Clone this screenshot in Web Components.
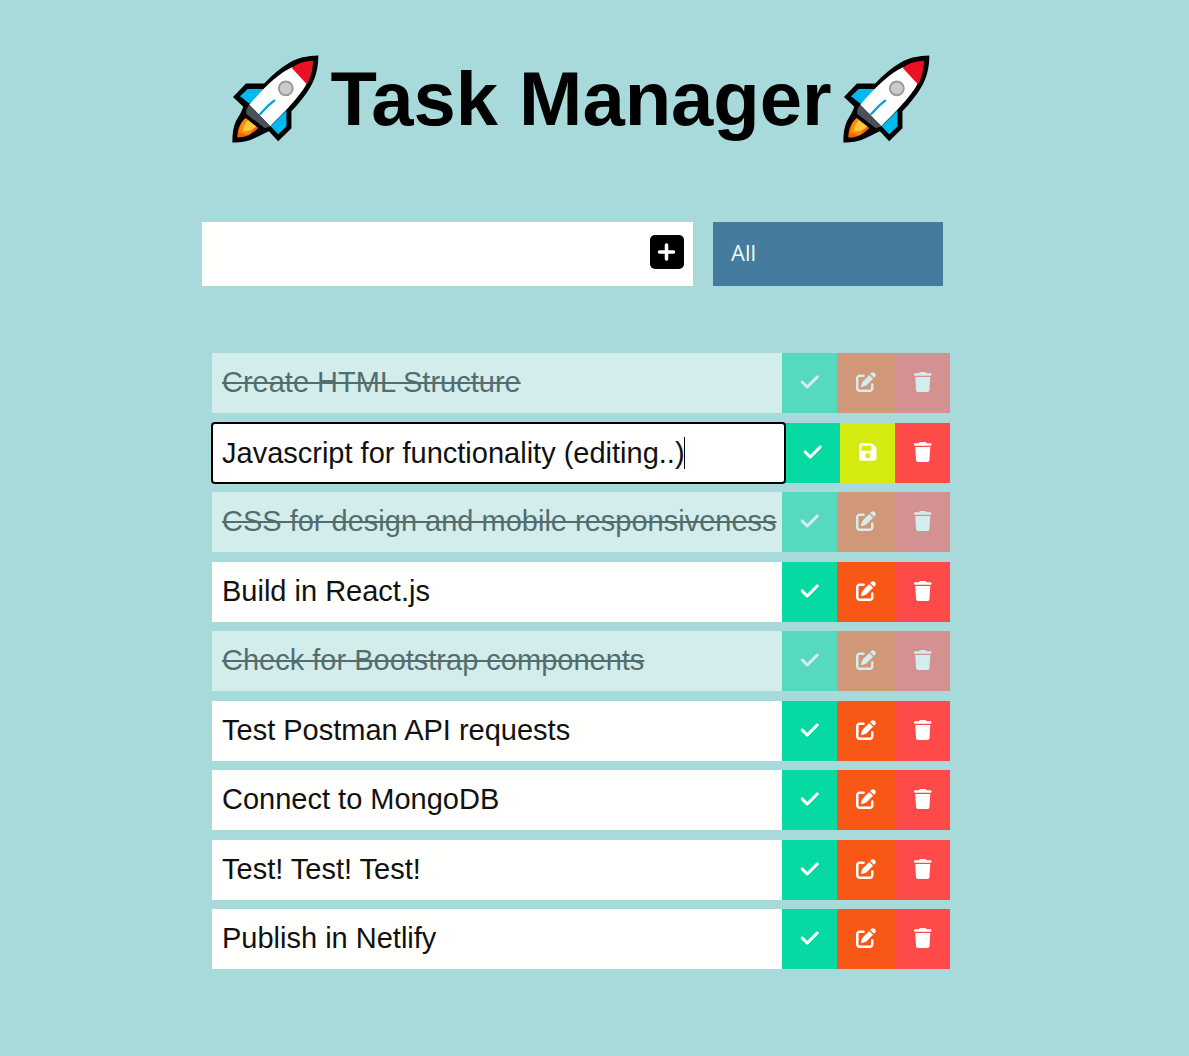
<!DOCTYPE html>
<html lang="en">
<head>
<meta charset="utf-8">
<meta name="viewport" content="width=device-width, initial-scale=1">
<title>Task Manager</title>
<style>
  body { margin: 0; min-height: 100vh; background: #a8dadc; color: #000; font-family: "Liberation Sans", Arial, sans-serif; }
</style>
</head>
<body>
<task-app></task-app>
<script>
const ICONS = {
  check: ['0 0 448 512', 'M438.6 105.4c12.5 12.5 12.5 32.8 0 45.3l-256 256c-12.5 12.5-32.8 12.5-45.3 0l-128-128c-12.5-12.5-12.5-32.8 0-45.3s32.8-12.5 45.3 0L160 338.7 393.4 105.4c12.5-12.5 32.8-12.5 45.3 0z'],
  edit: ['0 0 512 512', 'M471.6 21.7c-21.9-21.9-57.3-21.9-79.2 0L362.3 51.7l97.9 97.9 30.1-30.1c21.9-21.9 21.9-57.3 0-79.2L471.6 21.7zm-299.2 220c-6.1 6.1-10.8 13.6-13.5 21.9l-29.6 88.8c-2.9 8.6-.6 18.1 5.8 24.6s15.9 8.7 24.6 5.8l88.8-29.6c8.2-2.7 15.7-7.4 21.9-13.5L437.7 172.3 339.7 74.3 172.4 241.7zM96 64C43 64 0 107 0 160V416c0 53 43 96 96 96H352c53 0 96-43 96-96V320c0-17.7-14.3-32-32-32s-32 14.3-32 32v96c0 17.7-14.3 32-32 32H96c-17.7 0-32-14.3-32-32V160c0-17.7 14.3-32 32-32h96c17.7 0 32-14.3 32-32s-14.3-32-32-32H96z'],
  save: ['0 0 448 512', 'M64 32C28.7 32 0 60.7 0 96V416c0 35.3 28.7 64 64 64H384c35.3 0 64-28.7 64-64V173.3c0-17-6.7-33.3-18.7-45.3L352 50.7C340 38.7 323.7 32 306.7 32H64zm0 96c0-17.7 14.3-32 32-32H288c17.7 0 32 14.3 32 32v64c0 17.7-14.3 32-32 32H96c-17.7 0-32-14.3-32-32V128zM224 288a64 64 0 1 1 0 128 64 64 0 1 1 0-128z'],
  trash: ['0 0 448 512', 'M135.2 17.7L128 32H32C14.3 32 0 46.3 0 64S14.3 96 32 96H416c17.7 0 32-14.3 32-32s-14.3-32-32-32H320l-7.2-14.3C307.4 6.8 296.3 0 284.2 0H163.8c-12.1 0-23.2 6.8-28.6 17.7zM416 128H32L53.2 467c1.6 25.3 22.6 45 47.9 45H346.9c25.3 0 46.3-19.7 47.9-45L416 128z']
};
const icon = (name) => `<svg viewBox="${ICONS[name][0]}" aria-hidden="true"><path fill="currentColor" fill-rule="evenodd" d="${ICONS[name][1]}"/></svg>`;

customElements.define('rocket-icon', class extends HTMLElement {
  constructor() {
    super();
    this.attachShadow({ mode: 'open' }).innerHTML = `
      <style>:host { display: block; width: 87px; height: 88px; } svg { display: block; width: 100%; height: 100%; }</style>
      <svg viewBox="36 44 262 264" role="img" aria-label="rocket">
        <path fill="#000" d="M296 45C262 46 234 52 210 66C182 82 158 103 133 129H78L39 170L70 199C66 211 58 226 48 242C40 259 37 280 37 307C64 307 86 304 108 292C124 284 137 277 147 273L175 303L215 264V213C237 190 258 165 272 140C289 111 296 80 296 45Z"/>
        <path fill="#00b9f1" d="M83 146H132L90 191L60 168ZM152 258L200 211V259L175 282Z"/>
        <path fill="#fff" d="M218 80L262 128C244 162 214 195 151 258L88 193C135 139 176 99 218 80Z"/>
        <path fill="#e81224" d="M280 61C279 88 274 110 262 132L216 83C232 69 253 62 280 61Z"/>
        <circle cx="198" cy="144" r="21" fill="#cacaca" stroke="#9b9b9b" stroke-width="6"/>
        <path fill="#4b5257" d="M88 193L152 258L135 264L79 221C77 209 82 201 88 193Z"/>
        <path fill="#f7630c" d="M77 234L115 263C98 281 80 292 52 292C52 267 61 246 77 234Z"/>
        <path fill="#ff8c00" d="M78 234L107 257L86 285L57 278C59 257 66 242 78 234Z"/>
        <path fill="#ffc83d" d="M84 240L109 259C99 269 88 273 69 274C69 260 74 249 84 240Z"/>
        <path fill="none" stroke="#00a4e4" stroke-width="7" stroke-linecap="round" d="M121 221L145 196L163 181"/>
      </svg>`;
  }
});

customElements.define('app-title', class extends HTMLElement {
  constructor() {
    super();
    this.attachShadow({ mode: 'open' }).innerHTML = `
      <style>
        :host { display: block; }
        h1 { display: flex; justify-content: center; align-items: center; gap: 11px; margin: 0; font-size: 76px; line-height: 88px; font-weight: 700; }
      </style>
      <h1><rocket-icon></rocket-icon><span><slot></slot></span><rocket-icon></rocket-icon></h1>`;
  }
});

customElements.define('task-form', class extends HTMLElement {
  constructor() {
    super();
    this.attachShadow({ mode: 'open' }).innerHTML = `
      <style>
        :host { display: block; }
        form { display: flex; justify-content: center; height: 64px; }
        .entry { display: flex; width: 491px; background: #fffffd; }
        input { flex: 1; min-width: 0; border: 0; padding: 0 10px; background: none; font: 29px "Liberation Sans", Arial, sans-serif; outline: none; }
        button { display: flex; align-items: center; border: 0; padding: 0 9px 4px; background: none; cursor: pointer; }
        svg { display: block; width: 34px; height: 34px; }
        select { appearance: none; width: 230px; margin: 0 17px 0 20px; border: 0; border-radius: 0; padding: 0 18px 4px; background: #457b9d; color: #f1faee; font: 22px "Open Sans", sans-serif; }
      </style>
      <form onsubmit="return false">
        <div class="entry">
          <input type="text" aria-label="New task">
          <button type="submit" aria-label="Add task">
            <svg viewBox="0 0 34 34" aria-hidden="true"><rect width="34" height="34" rx="5"/><path d="M16.5 10v14M9.500 17h14" fill="none" stroke="#fff" stroke-width="3.500" stroke-linecap="round"/></svg>
          </button>
        </div>
        <select aria-label="Filter tasks"><option>All</option><option>Completed</option><option>Uncompleted</option></select>
      </form>`;
  }
});

customElements.define('task-item', class extends HTMLElement {
  constructor() {
    super();
    this.attachShadow({ mode: 'open' });
  }
  connectedCallback() {
    const editing = this.hasAttribute('editing');
    this.shadowRoot.innerHTML = `
      <style>
        :host { display: flex; height: 60px; font-size: 29px; line-height: 58px; }
        :host([done]) { opacity: .5; }
        .label { flex: 1; min-width: 0; box-sizing: border-box; padding: 0 0 2px 10px; background: #fffffd; color: #111; white-space: nowrap; }
        :host([done]) .label { text-decoration: line-through; color: #000; }
        .field { position: relative; flex: 1; min-width: 0; display: flex; }
        input { width: 100%; box-sizing: border-box; border: 0; padding: 0 0 0 10px; font: inherit; color: #111; background: #fff; outline: 2px solid #000; outline-offset: -1px; border-radius: 3px; caret-color: transparent; }
        .caret { position: absolute; left: 472px; top: 14px; width: 1px; height: 32px; background: #000; }
        button { flex: none; display: flex; justify-content: center; align-items: center; width: 55px; border: 0; padding: 0 0 2px; color: #fff; cursor: pointer; }
        svg { display: block; height: 20px; overflow: visible; }
        .check { background: #06d9a2; } .check path { stroke: currentColor; stroke-width: 16; }
        .edit { width: 58px; background: #f95716; }
        .save { background: #d5eb10; }
        .trash { background: #ff4a4a; }
      </style>
      ${editing
        ? '<div class="field"><input type="text" aria-label="Edit task"><span class="caret"></span></div>'
        : '<div class="label"><slot></slot></div>'}
      <button class="check" type="button" aria-label="Complete">${icon('check')}</button>
      ${editing
        ? `<button class="save" type="button" aria-label="Save">${icon('save')}</button>`
        : `<button class="edit" type="button" aria-label="Edit">${icon('edit')}</button>`}
      <button class="trash" type="button" aria-label="Delete">${icon('trash')}</button>`;
    if (editing) this.shadowRoot.querySelector('input').value = this.getAttribute('value');
  }
});

customElements.define('task-list', class extends HTMLElement {
  constructor() {
    super();
    this.attachShadow({ mode: 'open' }).innerHTML = `
      <style>
        :host { display: flex; flex-direction: column; justify-content: space-between; width: 738px; max-width: 100%; min-height: 616px; margin: 0 auto; }
      </style>
      <slot></slot>`;
  }
});

customElements.define('task-app', class extends HTMLElement {
  constructor() {
    super();
    this.attachShadow({ mode: 'open' }).innerHTML = `
      <style>
        :host { display: block; padding: 55px 27px 55px 0; }
        task-form { margin: 79px 0 67px; }
      </style>
      <app-title>Task Manager</app-title>
      <task-form></task-form>
      <task-list>
        <task-item done>Create HTML Structure</task-item>
        <task-item editing value="Javascript for functionality (editing..)"></task-item>
        <task-item done>CSS for design and mobile responsiveness</task-item>
        <task-item>Build in React.js</task-item>
        <task-item done>Check for Bootstrap components</task-item>
        <task-item>Test Postman API requests</task-item>
        <task-item>Connect to MongoDB</task-item>
        <task-item>Test! Test! Test!</task-item>
        <task-item>Publish in Netlify</task-item>
      </task-list>`;
  }
});
</script>
</body>
</html>
